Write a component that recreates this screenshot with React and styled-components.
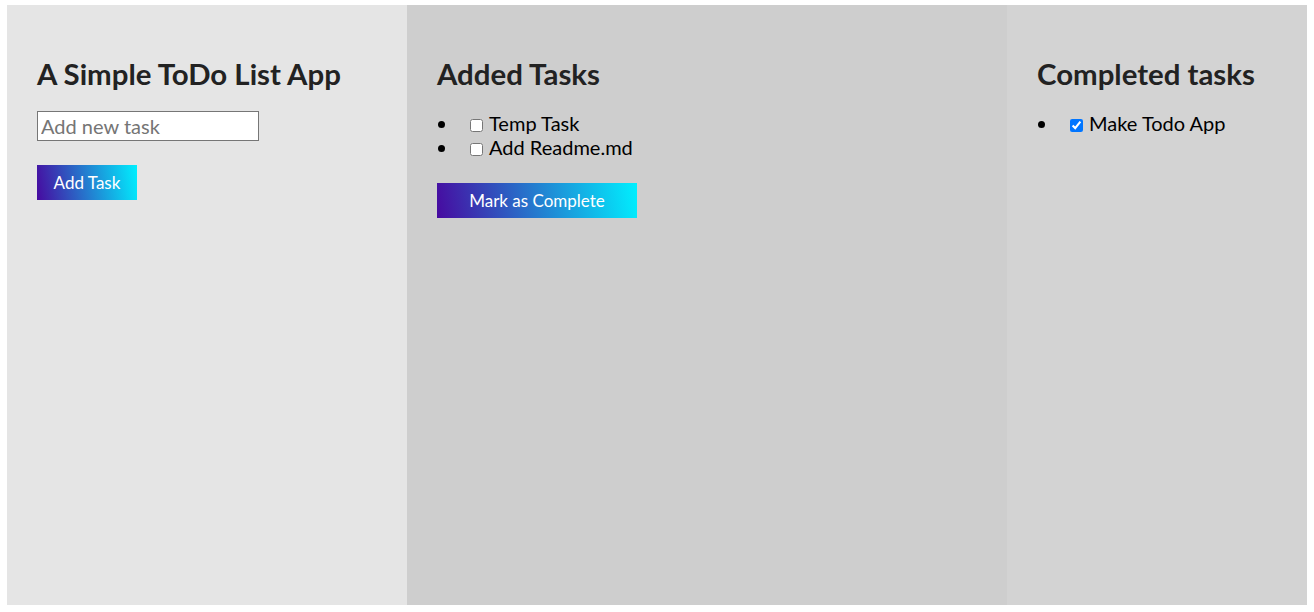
import React from "react";
import styled, { createGlobalStyle } from "styled-components";

const Global = createGlobalStyle`
  html, body { margin: 0; padding: 0; background: #ffffff; }
  body { font-family: Lato, "Open Sans", sans-serif; color: #000; }
`;

const Board = styled.div`
  width: 1300px;
  height: 600px;
  margin: 5px auto 0;
  display: grid;
  grid-template-columns: 400px 600px 300px;
`;

const Panel = styled.section`
  background: ${(p) => p.$bg};
  padding: 30px;
  box-sizing: border-box;
`;

const Title = styled.h1`
  font-family: Lato, sans-serif;
  font-size: 29.4px;
  font-weight: 700;
  line-height: 36px;
  margin: 21px 0 19px;
  color: #222;
`;

const TaskInput = styled.input`
  display: block;
  width: 222px;
  height: 30px;
  box-sizing: border-box;
  border: 1px solid #767676;
  padding: 1px 3px;
  font-family: Lato, sans-serif;
  font-size: 20px;
  color: #1f1f1f;
  background: #fff;
  outline: none;
  &::placeholder { color: #757575; }
`;

const GradientButton = styled.button`
  display: block;
  width: ${(p) => p.$w}px;
  height: 35px;
  margin-top: ${(p) => p.$mt}px;
  border: none;
  padding: 0;
  background: linear-gradient(80deg, #470aa0 0%, #00f0ff 100%);
  color: #fff;
  font-family: Lato, sans-serif;
  font-size: 17px;
  cursor: pointer;
`;

const List = styled.ul`
  margin: 0;
  padding-left: 21px;
  font-size: 20px;
  line-height: 24px;
  color: #000;
`;

const Item = styled.li`
  padding-left: 8px;
`;

const Check = styled.input`
  width: 13px;
  height: 13px;
  margin: 0 6px 0 4px;
  vertical-align: -1px;
`;

const tasks = ["Temp Task", "Add Readme.md"];

export default function App() {
  return (
    <>
      <Global />
      <Board>
        <Panel $bg="#e5e5e5">
          <Title>A Simple ToDo List App</Title>
          <TaskInput placeholder="Add new task" />
          <GradientButton $w={100} $mt={24}>Add Task</GradientButton>
        </Panel>
        <Panel $bg="#cecece">
          <Title>Added Tasks</Title>
          <List>
            {tasks.map((t) => (
              <Item key={t}>
                <Check type="checkbox" />
                {t}
              </Item>
            ))}
          </List>
          <GradientButton $w={200} $mt={24}>Mark as Complete</GradientButton>
        </Panel>
        <Panel $bg="#d3d3d3">
          <Title>Completed tasks</Title>
          <List>
            <Item>
              <Check type="checkbox" defaultChecked />
              Make Todo App
            </Item>
          </List>
        </Panel>
      </Board>
    </>
  );
}
